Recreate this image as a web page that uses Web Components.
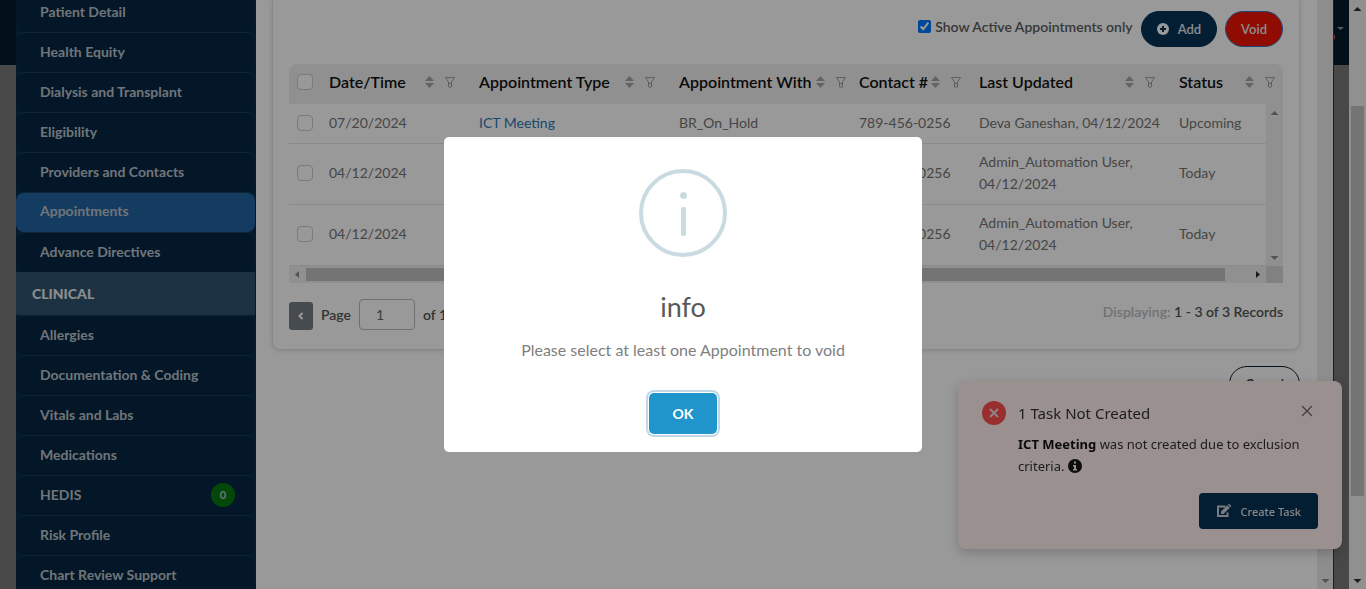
<!DOCTYPE html>
<html lang="en">
<head>
<meta charset="utf-8">
<title>Appointments</title>
<style>
  html, body { margin: 0; height: 100%; overflow: hidden; }
  body { font-family: Lato, "Noto Sans", sans-serif; font-size: 14px; color: #757575; }
</style>
</head>
<body>
<app-shell>
  <side-nav slot="nav">
    <nav-item>Patient Detail</nav-item>
    <nav-item>Health Equity</nav-item>
    <nav-item>Dialysis and Transplant</nav-item>
    <nav-item>Eligibility</nav-item>
    <nav-item>Providers and Contacts</nav-item>
    <nav-item active>Appointments</nav-item>
    <nav-item>Advance Directives</nav-item>
    <nav-heading>CLINICAL</nav-heading>
    <nav-item>Allergies</nav-item>
    <nav-item>Documentation &amp; Coding</nav-item>
    <nav-item>Vitals and Labs</nav-item>
    <nav-item>Medications</nav-item>
    <nav-item count="0">HEDIS</nav-item>
    <nav-item>Risk Profile</nav-item>
    <nav-item>Chart Review Support</nav-item>
  </side-nav>
  <appointments-card></appointments-card>
  <pill-button slot="actions" kind="outline">Cancel</pill-button>
</app-shell>
<task-toast heading="1 Task Not Created"><b>ICT Meeting</b> <span>was not created due to exclusion</span> <span>criteria.</span></task-toast>
<alert-dialog heading="info">Please select at least one Appointment to void</alert-dialog>

<script>
class Base extends HTMLElement {
  connectedCallback() {
    if (!this.shadowRoot) this.attachShadow({ mode: "open" }).innerHTML = this.render();
  }
}

customElements.define("scroll-bar", class extends Base {
  render() {
    const [before, thumb, after] = (this.getAttribute("parts") || "1 0 0").split(" ");
    const row = this.hasAttribute("horizontal");
    const cls = n => "arrow " + (this.getAttribute("live") === "both" || this.getAttribute("live") === n ? "on" : "");
    const a = row ? "M10 5v7L6 8.500z" : "M4.500 11h8L8.500 7z";
    const b = row ? "M7 5v7l4-3.500z" : "M4.500 7h8l-4 4z";
    return `<style>
      :host { display: flex; flex-direction: ${row ? "row" : "column"}; background: var(--track, #f1f1f1); min-width: 0; min-height: 0; }
      .arrow { width: 17px; height: 17px; flex: none; fill: #8a8a8a; display: block; }
      .on { fill: #303030; }
      .space { flex: 1 1 0; }
      .thumb { background: #c1c1c1; margin: ${row ? "2px 0" : "0 2px"}; }
    </style>
    <svg class="${cls("start")}" viewBox="0 0 17 17"><path d="${a}"/></svg>
    <div class="space" style="flex-grow:${before}"></div>
    <div class="space thumb" style="flex-grow:${thumb}"></div>
    <div class="space" style="flex-grow:${after}"></div>
    <svg class="${cls("end")}" viewBox="0 0 17 17"><path d="${b}"/></svg>`;
  }
});

customElements.define("app-shell", class extends Base {
  render() {
    return `<style>
      :host { display: grid; grid-template-columns: 16px 240px minmax(0, 1fr) 16px 16px 17px; height: 100vh; overflow: hidden; }
      .edge { background: linear-gradient(#001a2a 65px, #787878 65px); }
      .right { border-left: 1px solid #333; box-sizing: border-box; overflow: hidden; }
      .right svg { display: block; }
      main { background: #fff; padding: 0 17px 0 16px; overflow: hidden; }
      .actions { display: flex; justify-content: flex-end; padding-top: 16px; }
      .inner { margin-top: -17px; --track: #ececec; }
      ::slotted(side-nav) { min-height: 0; }
    </style>
    <div class="edge"></div>
    <slot name="nav"></slot>
    <main><slot></slot><div class="actions"><slot name="actions"></slot></div></main>
    <scroll-bar class="inner" parts="1 0 0"></scroll-bar>
    <div class="edge right"><svg width="15" height="65"><path d="M3 27h7l-3.500 3z" fill="#8f9aa3"/><circle cx="-3" cy="37" r="4" fill="#e8604c"/></svg></div>
    <scroll-bar parts="89 390 76" live="both"></scroll-bar>`;
  }
});

customElements.define("side-nav", class extends Base {
  render() {
    return `<style>
      :host { display: block; overflow: hidden; background: #062e4a; }
      nav { margin: -8px 1px 0 0; }
    </style><nav aria-label="Patient sections"><slot></slot></nav>`;
  }
});

customElements.define("nav-item", class extends Base {
  render() {
    const n = this.getAttribute("count");
    return `<style>
      :host { display: block; }
      a { display: flex; align-items: center; justify-content: space-between; box-sizing: border-box; height: 40px; padding: 0 20px 2px 24px;
          border-top: 1px solid #1a3c57; border-radius: 8px; background: #072743; color: #bcc3ca; font-weight: 700; text-decoration: none; }
      :host([active]) a { background: #2064a0; padding-bottom: 4px; }
      span { width: 24px; line-height: 24px; border-radius: 12px; background: #08780f; text-align: center; font-size: 11px; }
    </style><a href="#"><slot></slot>${n === null ? "" : `<span>${n}</span>`}</a>`;
  }
});

customElements.define("nav-heading", class extends Base {
  render() {
    return `<style>
      :host { display: block; line-height: 43px; padding-left: 16px; background: #2f526e; color: #e6eaed; font-weight: 900; }
    </style><slot></slot>`;
  }
});

customElements.define("pill-button", class extends Base {
  render() {
    const icon = this.hasAttribute("plus") ? `<svg width="12" height="12" viewBox="0 0 12 12"><circle cx="6" cy="6" r="6" fill="#fff"/><path d="M6 3v6M3 6h6" stroke="#053255" stroke-width="2"/></svg>` : "";
    return `<style>
      :host { display: block; }
      button { display: flex; align-items: center; gap: 9px; height: 36px; padding: 0 15px; border: 1px solid #053255; border-radius: 18px;
               background: #053255; color: #e4e8ec; font: 600 13px Lato, sans-serif; }
      :host([kind=danger]) button { background: #f01505; border-color: #2b7bc8; }
      :host([kind=outline]) button { background: #fff; border-color: #0a1c2c; color: #333; }
    </style><button type="button">${icon}<slot></slot></button>`;
  }
});

customElements.define("appointments-card", class extends Base {
  render() {
    return `<style>
      :host { display: block; border: 1px solid #e3e3e3; border-top: 0; border-radius: 0 0 8px 8px; box-shadow: 0 1px 4px #0002; padding: 11px 16px 19px; }
      .bar { display: flex; justify-content: flex-end; align-items: center; gap: 8px; padding-bottom: 17px; }
      label { display: flex; align-items: flex-end; gap: 4px; padding-bottom: 4px; line-height: 18px; font-weight: 600; color: #5c5c5c; }
      input { width: 13px; height: 13px; margin: 0 0 3px; accent-color: #0075ff; }
    </style>
    <div class="bar">
      <label><input type="checkbox" checked>Show Active Appointments only</label>
      <pill-button plus>Add</pill-button>
      <pill-button kind="danger">Void</pill-button>
    </div>
    <appointments-table></appointments-table>
    <page-controls></page-controls>`;
  }
});

customElements.define("appointments-table", class extends Base {
  render() {
    const cols = [["Date/Time", "date"], ["Appointment Type", "type"], ["Appointment With", "with"], ["Contact #", "contact"], ["Last Updated", "updated"], ["Status", "status"]];
    const rows = [
      ["07/20/2024", "Deva Ganeshan, 04/12/2024", "Upcoming"],
      ["04/12/2024", "Admin_Automation User, 04/12/2024", "Today"],
      ["04/12/2024", "Admin_Automation User, 04/12/2024", "Today"]
    ];
    return `<style>
      :host { display: grid; grid-template-columns: minmax(0, 1fr) 17px; grid-template-rows: 40px auto 17px; }
      table { grid-area: 1 / 1 / 3 / 3; width: 100%; table-layout: fixed; border-spacing: 0; line-height: 22px; }
      .v { grid-area: 2 / 2; }
      .h { grid-area: 3 / 1; }
      .corner { grid-area: 3 / 2; background: #d8d8d8; }
      .check { width: 32px; } .date { width: 150px; } .type, .updated { width: 200px; } .with { width: 180px; } .contact { width: 120px; }
      th { box-sizing: border-box; height: 40px; padding: 0 15px 4px 8px; background: #f0f0f0; color: #111; font-size: 16px; font-weight: 600; text-align: left; white-space: nowrap; }
      th:first-child { border-top-left-radius: 8px; } th:last-child { border-top-right-radius: 8px; }
      th.check { padding: 0 0 4px 8px; }
      th.with { padding-right: 4px; } th.contact { padding-right: 9px; } th.status { padding-right: 7px; }
      th div { display: flex; align-items: center; justify-content: space-between; }
      th svg { flex: none; }
      td { box-sizing: border-box; height: 40px; padding: 7px 8px 9px; border-bottom: 1px solid #e6e6e6; }
      td:first-child { padding: 0 0 2px 8px; }
      td:last-child { padding-right: 24px; }
      a { color: #2a7ab8; text-decoration: none; }
      input { appearance: none; display: block; box-sizing: border-box; width: 16px; height: 16px; margin: 0; border: 1px solid #cbcbcb; border-radius: 4px; background: #fff; }
    </style>
    <table>
      <thead><tr><th class="check"><input type="checkbox" aria-label="Select all"></th>
      ${cols.map(([t, c]) => `<th class="${c}"><div>${t}<svg width="32" height="14" viewBox="0 0 32 14"><path d="M1 6h9L5.500 1zM1 8h9l-4.500 5z" fill="#a5a5a5"/><path d="M21.500 2.500h9L27.500 7v5h-3V7zM24.500 8.500h3" fill="none" stroke="#a0a0a0"/></svg></div></th>`).join("")}
      </tr></thead>
      <tbody>${rows.map(([d, u, s], i) => `<tr><td><input type="checkbox" aria-label="Select row ${i + 1}"></td>
        <td>${d}</td><td><a href="#">ICT Meeting</a></td><td>BR_On_Hold</td><td>789-456-0256</td><td>${u}</td><td>${s}</td></tr>`).join("")}</tbody>
    </table>
    <scroll-bar class="v" parts="1 0 0"></scroll-bar>
    <scroll-bar class="h" horizontal parts="0 919 24" live="end"></scroll-bar>
    <div class="corner"></div>`;
  }
});

customElements.define("page-controls", class extends Base {
  render() {
    return `<style>
      :host { display: flex; align-items: center; gap: 8px; padding-top: 16px; font-weight: 600; color: #555; }
      button { width: 24px; height: 28px; padding: 0; border: 0; border-radius: 3px; background: #757d84; margin-top: 3px; }
      svg { display: block; margin: auto; }
      label { display: flex; align-items: center; gap: 8px; }
      input { box-sizing: border-box; width: 56px; height: 31px; border: 1px solid #b5bac0; border-radius: 4px; padding: 0 16px; background: #fff; color: #666; font: 14px Lato, sans-serif; }
      p { margin: 0 0 6px auto; } p span { color: #bcbcbc; }
    </style>
    <button type="button" aria-label="Previous page"><svg width="8" height="8" viewBox="0 0 8 8"><path d="M5.500 1 2.500 4l3 3" fill="none" stroke="#fff" stroke-width="2"/></svg></button>
    <label>Page <input type="text" value="1"></label><span>of 1</span>
    <p><span>Displaying:</span> 1 - 3 of 3 Records</p>`;
  }
});

customElements.define("task-toast", class extends Base {
  render() {
    return `<style>
      :host { position: fixed; right: 24px; bottom: 40px; box-sizing: border-box; width: 384px; padding: 20px 24px; border-radius: 8px; background: #fff1ee; box-shadow: 0 4px 12px #0003;
              display: grid; grid-template-columns: 24px 1fr 22px; column-gap: 12px; font: 13px/22px "Noto Sans", sans-serif; color: #333; }
      .icon { display: block; }
      h2 { margin: 0; font-size: 15px; line-height: 24px; font-weight: 400; }
      .close { align-self: start; height: 22px; border: 0; padding: 0; background: none; }
      p { grid-column: 2 / 4; margin: 8px 0 16px; }
      .info { vertical-align: -2px; }
      ::slotted(b) { color: #111; }
      .create { grid-column: 1 / 4; justify-self: end; display: flex; align-items: center; gap: 9px; height: 36px; padding: 0 17px; border: 0; border-radius: 4px; background: #053255; color: #dfe3e7; font: 500 11px "Noto Sans", sans-serif; }
    </style>
    <svg class="icon" width="24" height="24" viewBox="0 0 24 24"><circle cx="12" cy="12" r="12" fill="#ff4d4f"/><path d="M8 8l8 8M16 8l-8 8" stroke="#eedddd" stroke-width="2"/></svg>
    <h2>${this.getAttribute("heading")}</h2>
    <button class="close" type="button" aria-label="Close"><svg width="12" height="12" viewBox="0 0 12 12"><path d="M1 1l10 10M11 1L1 11" stroke="#666" stroke-width="1.200"/></svg></button>
    <p><slot></slot> <svg class="info" width="14" height="14" viewBox="0 0 14 14"><circle cx="7" cy="7" r="7" fill="#161616"/><path d="M6 2.500h2v2H6zM5 6h3v4h1v1.500H5V10h1V7.500H5z" fill="#fff1ee"/></svg></p>
    <button class="create" type="button"><svg width="16" height="14" viewBox="0 0 16 14"><path d="M9.500 2.500H2v9.500h9.500V8.500" fill="none" stroke="#c9cfd5" stroke-width="2"/><path d="M5 7.500 11.300 1.200l2.500 2.500L7.500 10H5zM12 .600l.600-.500q.600-.200 1 .100l1.400 1.400q.400.500 0 1l-.600.600z" fill="#c9cfd5"/></svg>Create Task</button>`;
  }
});

customElements.define("alert-dialog", class extends Base {
  render() {
    return `<style>
      :host { position: fixed; inset: 0; display: flex; align-items: center; justify-content: center; background: rgba(0, 0, 0, .4); }
      section { box-sizing: border-box; width: 478px; max-width: 90%; padding: 32px 24px 18px; border-radius: 5px; background: #fff; text-align: center; }
      svg { display: block; margin: auto; }
      h1 { margin: 34px 0 0; font-size: 27px; line-height: 32px; font-weight: 400; color: #595959; }
      p { margin: 17px 0 33px; font-size: 16px; line-height: 20px; color: #808080; }
      button { display: block; height: 41px; width: 68px; margin: 0 auto; border: 0; border-radius: 5px; background: #1f95cb; color: #fff; font: 700 14px Lato, sans-serif; outline: none;
               box-shadow: 0 0 0 1px #fff, 0 0 0 3px #c3d8e6; }
    </style>
    <section role="alertdialog" aria-modal="true" aria-labelledby="t">
      <svg width="88" height="88" viewBox="0 0 88 88" fill="#c9dae1"><circle cx="44" cy="44" r="42" fill="none" stroke="#c9dae1" stroke-width="4"/><circle cx="44.500" cy="26.500" r="3.500"/><rect x="42" y="38" width="5" height="29" rx="2"/></svg>
      <h1 id="t">${this.getAttribute("heading")}</h1>
      <p><slot></slot></p>
      <button type="button">OK</button>
    </section>`;
  }
});
</script>
</body>
</html>
